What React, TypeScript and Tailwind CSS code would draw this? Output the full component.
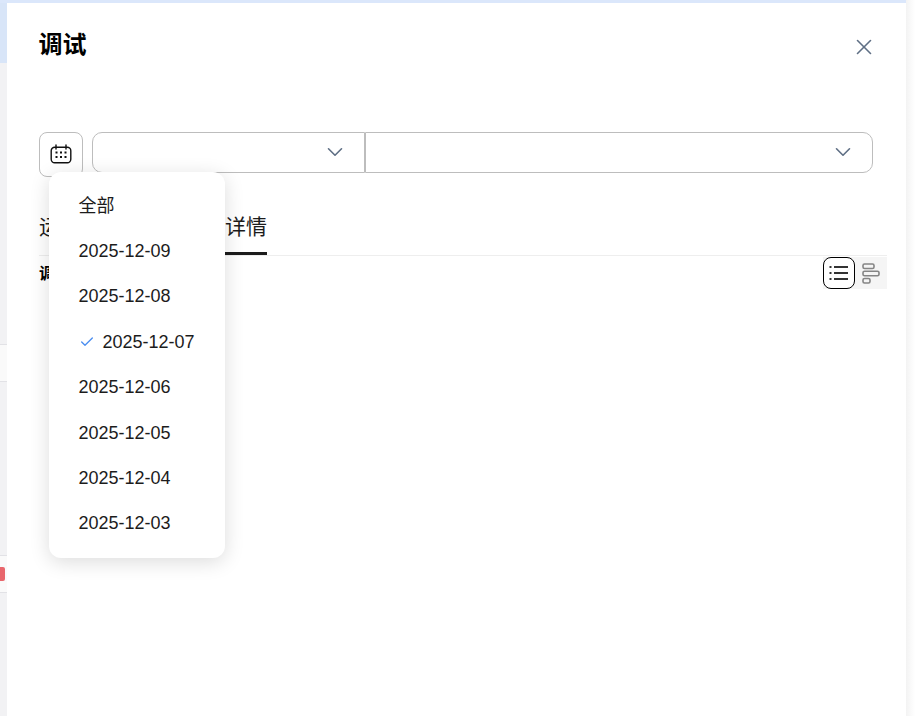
import { Check, ChevronDown, X } from "lucide-react";

const dates = ["全部", "2025-12-09", "2025-12-08", "2025-12-07", "2025-12-06", "2025-12-05", "2025-12-04", "2025-12-03"];

function CalendarIcon() {
  return (
    <svg width="22" height="20" viewBox="0 0 22 20" fill="none" stroke="#111" strokeWidth="1.4" className="-mt-[2px]">
      <rect x="1.2" y="3.2" width="19.6" height="15.6" rx="3.5" />
      <path d="M6 1v4M16 1v4" strokeLinecap="round" />
      <g fill="#111" stroke="none">
        <rect x="5.5" y="7.5" width="2" height="2" />
        <rect x="10" y="7.5" width="2" height="2" />
        <rect x="14.5" y="7.5" width="2" height="2" />
        <rect x="5.5" y="12" width="2" height="2" />
        <rect x="10" y="12" width="2" height="2" />
        <rect x="14.5" y="12" width="2" height="2" />
      </g>
    </svg>
  );
}

function ListIcon() {
  return (
    <svg width="20" height="16" viewBox="0 0 20 16" fill="none" stroke="#333" strokeWidth="1.8">
      <path d="M5 2h14M5 8h14M5 14h14" />
      <path d="M0.5 2h2M0.5 8h2M0.5 14h2" strokeWidth="2" />
    </svg>
  );
}

function GanttIcon() {
  return (
    <svg width="18" height="21" viewBox="0 0 18 21" fill="none" stroke="#858585" strokeWidth="1.6">
      <rect x="1" y="1" width="11" height="4.5" rx="1.5" />
      <rect x="1" y="8.2" width="16" height="4.5" rx="1.5" />
      <rect x="1" y="15.5" width="7" height="4.5" rx="1.5" />
    </svg>
  );
}

function SideStrip() {
  return (
    <div className="flex w-[7px] shrink-0 flex-col bg-[#f2f2f4]">
      <div className="h-[60px] bg-[#d8e5f8]" />
      <div className="h-[281px]" />
      <div className="h-[38px] border-y border-[#e2e2e6] bg-[#fafafa]" />
      <div className="h-[173px]" />
      <div className="flex h-[38px] items-center border-y border-[#e2e2e6] bg-[#fafafa]">
        <div className="h-[14px] w-[5px] rounded-r-[2px] bg-[#e8666c]" />
      </div>
    </div>
  );
}

function DateMenu() {
  return (
    <div className="absolute left-[42px] top-[169px] z-10 w-[176px] rounded-[12px] bg-white py-[11.5px] shadow-[0_4px_20px_rgba(0,0,0,0.14)]">
      {dates.map((d) => (
        <div key={d} className="flex h-[45.4px] items-center pl-[29.5px] text-[18px] text-[#1c1c1c]">
          {d === "2025-12-07" && <Check size={16} stroke="#4b8ef0" strokeWidth={2} className="mr-[8px]" />}
          {d}
        </div>
      ))}
    </div>
  );
}

export default function App() {
  return (
    <div
      className="flex h-screen w-[915px] overflow-hidden bg-white"
      style={{ fontFamily: '"Liberation Sans", "Noto Sans CJK SC", sans-serif' }}
    >
      <div className="flex w-[906px] flex-col">
        <div className="h-[3px] shrink-0 bg-[#dbe7fb]" />
        <div className="flex flex-1">
          <SideStrip />
          <div className="relative w-[899px] bg-white pl-8 pr-[33px]">
            <div className="flex h-[129px] justify-between pt-[26px]">
              <h1 className="-ml-[0.5px] text-[24px] font-bold leading-[32px] text-black">调试</h1>
              <X size={26} strokeWidth={1.5} className="mt-[5px] -mr-[4px] text-[#5f6f85]" />
            </div>

            <div className="flex items-start">
              <div className="flex h-[45px] w-[44px] items-center justify-center rounded-[8px] border border-[#bdbdbd]">
                <CalendarIcon />
              </div>
              <div className="ml-[9px] flex h-[41px] w-[273px] items-center justify-end rounded-l-[10px] border border-[#bdbdbd] pr-[16px]">
                <ChevronDown size={26} strokeWidth={1.5} className="-mt-[2px] text-[#5f6f85]" />
              </div>
              <div className="flex h-[41px] w-[508px] items-center justify-end rounded-r-[10px] border border-[#bdbdbd] pr-[16px]">
                <ChevronDown size={26} strokeWidth={1.5} className="-mt-[2px] text-[#5f6f85]" />
              </div>
            </div>

            <div className="-mr-[14px] mt-[33px] flex h-[46px] gap-[60px] border-b border-[#eeeeee] pt-[2px] text-[21px] leading-[30px] text-[#1c1c1c]">
              <div>运行日志</div>
              <div className="h-[43px] border-b-[3px] border-[#1c1c1c]">调试详情</div>
            </div>

            <div className="-mr-[14px] mt-[1px] flex h-[34px] items-start justify-between">
              <div className="pt-[5px] text-[16px] font-bold leading-[24px] text-black">调试详情</div>
              <div className="flex bg-[#f5f5f5]">
                <div className="flex h-[32px] w-[32px] items-center justify-center rounded-[8px] border border-black bg-white">
                  <ListIcon />
                </div>
                <div className="flex h-[32px] w-[32px] items-center justify-center">
                  <GanttIcon />
                </div>
              </div>
            </div>

            <DateMenu />
          </div>
        </div>
      </div>
      <div className="w-[9px] bg-gradient-to-r from-[#f3f3f3] to-white" />
    </div>
  );
}
